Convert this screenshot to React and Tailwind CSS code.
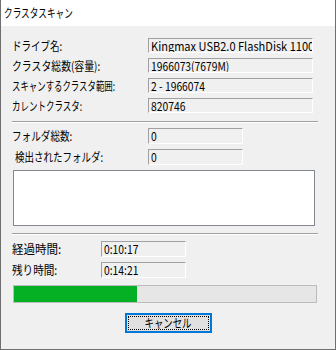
import React, { useLayoutEffect, useRef, useState } from 'react';

const font = { fontFamily: '"Noto Sans CJK JP", "Noto Sans", sans-serif' };

// squeeze the text horizontally to the width the bitmap font takes in the original
function Fit({ w, children, center = false }) {
  const ref = useRef(null);
  const [s, setS] = useState(1);

  useLayoutEffect(() => {
    const measure = () => {
      if (ref.current && ref.current.offsetWidth) setS(w / ref.current.offsetWidth);
    };
    measure();
    document.fonts?.ready.then(measure);
  }, [w]);

  return (
    <span
      ref={ref}
      className={`inline-block whitespace-nowrap ${center ? 'origin-center' : 'origin-left'}`}
      style={{ transform: `scaleX(${s})` }}
    >
      {children}
    </span>
  );
}

function Field({ value, w, h = 'h-[15px]', wide = false }) {
  return (
    <div
      className={`${w} ${h} flex items-center overflow-hidden whitespace-nowrap border-t border-l border-t-[#a0a0a0] border-l-[#a0a0a0] border-b border-r border-b-white border-r-white bg-[#f0f0f0] pl-[2px] text-[12px] leading-none`}
    >
      <span className={`inline-block origin-left ${wide ? 'scale-x-[0.92]' : 'scale-x-[0.86]'}`}>{value}</span>
    </div>
  );
}

function Row({ label, tw, value, labelW, fieldW, h, gap = 'mt-[5px]', indent = '', wide }) {
  return (
    <div className={`flex items-center ${gap}`}>
      <div className={`${labelW} ${indent} text-[12px] leading-none`}>
        <Fit w={tw}>{label}</Fit>
      </div>
      <Field value={value} w={fieldW} h={h} wide={wide} />
    </div>
  );
}

function Separator() {
  return <div className="w-[306px] border-t border-t-[#a0a0a0] border-b border-b-white" />;
}

export default function App() {
  return (
    <div style={font} className="w-[336px] h-[350px] bg-[#f0f0f0] text-black border-l border-r border-b border-[#6f6f6f] flex flex-col">
      <div className="h-[26px] bg-white flex items-center pl-[3px] text-[12px]">
        <Fit w={69}>クラスタスキャン</Fit>
      </div>

      <div className="pl-[11px] flex flex-col">
        <div className="mt-[12px]">
          <Row label="ドライブ名:" tw={50} value="Kingmax USB2.0 FlashDisk 1100" labelW="w-[136px]" fieldW="w-[165px]" gap="" wide />
          <Row label="クラスタ総数(容量):" tw={88} value="1966073(7679M)" labelW="w-[136px]" fieldW="w-[165px]" />
          <Row label="スキャンするクラスタ範囲:" tw={103} value="2 - 1966074" labelW="w-[136px]" fieldW="w-[165px]" />
          <Row label="カレントクラスタ:" tw={70} value="820746" labelW="w-[136px]" fieldW="w-[165px]" />
        </div>

        <div className="mt-[8px]">
          <Separator />
        </div>

        <div className="mt-[5px]">
          <Row label="フォルダ総数:" tw={60} value="0" labelW="w-[136px]" fieldW="w-[95px]" h="h-[16px]" gap="" />
          <Row label="検出されたフォルダ:" tw={88} value="0" labelW="w-[136px]" fieldW="w-[95px]" h="h-[16px]" indent="pl-[3px]" />
        </div>

        <div className="mt-[5px] ml-[1px] w-[302px] h-[56px] bg-white border border-[#828790]" />

        <div className="mt-[7px]">
          <Separator />
        </div>

        <div className="mt-[6px]">
          <Row label="経過時間:" tw={49} value="0:10:17" labelW="w-[89px]" fieldW="w-[85px]" h="h-[16px]" gap="" />
          <Row label="残り時間:" tw={45} value="0:14:21" labelW="w-[89px]" fieldW="w-[85px]" h="h-[16px]" />
        </div>

        <div className="mt-[7px] ml-[1px] w-[304px] h-[18px] border border-[#bcbcbc] bg-[#e6e6e6]">
          <div className="w-[123px] h-full bg-[#06b025]" />
        </div>

        <div className="mt-[10px] ml-[113px] w-[87px] h-[20px] border-2 border-[#0078d7] bg-[#e1e1e1] p-[1px]">
          <div className="w-full h-full border border-dotted border-black flex items-center justify-center text-[12px] leading-none">
            <Fit w={47} center>キャンセル</Fit>
          </div>
        </div>
      </div>
    </div>
  );
}
